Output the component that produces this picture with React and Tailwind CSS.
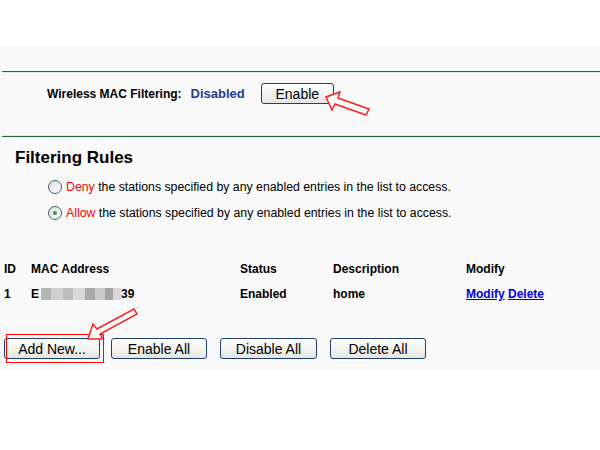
import React from 'react';

const Btn = ({ children, className = '' }) => (
  <button
    className={`h-[21px] rounded-[3px] border border-[#1c3f74] bg-gradient-to-b from-white to-[#e6e6e0] text-[14px] leading-none text-black ${className}`}
  >
    {children}
  </button>
);

const Radio = ({ checked }) => (
  <span className="flex h-[14px] w-[14px] items-center justify-center rounded-full border border-[#3d5b80] bg-gradient-to-br from-[#dcdcd6] to-white">
    {checked && <span className="h-[4px] w-[4px] rounded-full bg-[#2fa33a]" />}
  </span>
);

export default function App() {
  return (
    <div
      className="relative h-[450px] w-[600px] overflow-hidden bg-white text-black"
      style={{ fontFamily: '"Liberation Sans", Arial, sans-serif' }}
    >
      <div className="h-[45px]" />
      <div className="h-[325px] bg-[#f9f9f9]">
        <div className="h-[26px]" />
        <div className="ml-[2px] h-[1px] bg-[#1d6a38]" />
        <div className="ml-[2px] h-[1px] bg-[#d6ece4]" />

        {/* MAC filtering status */}
        <div className="flex h-[62px] items-start pt-[10px]">
          <div className="flex h-[21px] items-center">
            <span className="ml-[47px] text-[12px] font-bold">Wireless MAC Filtering:</span>
            <span className="ml-[9px] text-[13px] font-bold text-[#1d3f97]">Disabled</span>
            <Btn className="ml-[16px] w-[73px]">Enable</Btn>
          </div>
        </div>
        <div className="ml-[2px] h-[1px] bg-[#d6ece4]" />
        <div className="ml-[2px] h-[1px] bg-[#1d6a38]" />

        {/* Filtering rules */}
        <div className="ml-[15px] mt-[11px] h-[20px] text-[17px] font-semibold leading-[20px]">
          Filtering Rules
        </div>
        <div className="mt-[9px] flex h-[20px] items-center text-[12.3px]">
          <span className="ml-[48px]">
            <Radio />
          </span>
          <span className="ml-[4px]">
            <span className="text-[#f00]">Deny</span> the stations specified by any enabled entries in the list to access.
          </span>
        </div>
        <div className="mt-[6px] flex h-[20px] items-center text-[12.3px]">
          <span className="ml-[48px]">
            <Radio checked />
          </span>
          <span className="ml-[4px]">
            <span className="text-[#f00]">Allow</span> the stations specified by any enabled entries in the list to access.
          </span>
        </div>

        {/* Table */}
        <div className="mt-[36px] grid h-[20px] grid-cols-[27px_209px_93px_133px_1fr] items-center pl-[4px] text-[12px] font-bold">
          <span>ID</span>
          <span>MAC Address</span>
          <span>Status</span>
          <span>Description</span>
          <span>Modify</span>
        </div>
        <div className="mt-[5px] grid h-[20px] grid-cols-[27px_209px_93px_133px_1fr] items-center pl-[4px] text-[12px] font-bold">
          <span>1</span>
          <span className="flex items-center">
            E
            <span className="ml-[2px] flex h-[12px]">
              <span className="w-[10px] bg-[#b4b4b4]" />
              <span className="w-[12px] bg-[#cfcfcf]" />
              <span className="w-[10px] bg-[#bdbdbd]" />
              <span className="w-[12px] bg-[#d9d9d9]" />
              <span className="w-[10px] bg-[#a9a9a9]" />
              <span className="w-[10px] bg-[#c9c9c9]" />
              <span className="w-[8px] bg-[#a3a3a3]" />
              <span className="w-[8px] bg-[#d7d7d7]" />
            </span>
            39
          </span>
          <span>Enabled</span>
          <span>home</span>
          <span className="text-[#0000ee]">
            <span className="underline">Modify</span> <span className="underline">Delete</span>
          </span>
        </div>

        {/* Buttons */}
        <div className="mt-[34px] flex h-[21px] items-center pl-[4px]">
          <Btn className="w-[96px]">Add New...</Btn>
          <Btn className="ml-[11px] w-[96px]">Enable All</Btn>
          <Btn className="ml-[13px] w-[97px]">Disable All</Btn>
          <Btn className="ml-[13px] w-[96px]">Delete All</Btn>
        </div>
      </div>

      {/* Annotations */}
      <div className="absolute left-[6px] top-[334px] h-[29px] w-[98px] border border-[#ff0000]" />
      <svg className="absolute left-0 top-0" width="600" height="450">
        <g fill="white" stroke="#ff2020" strokeWidth="1.5" strokeLinejoin="miter">
          <polygon points="326,97 340,92 338,98 369,109 366,115 335,104 332,110" />
          <polygon points="88,339 93,324 97,329 134,309 137,314 100,334 103,339" />
        </g>
      </svg>
    </div>
  );
}
